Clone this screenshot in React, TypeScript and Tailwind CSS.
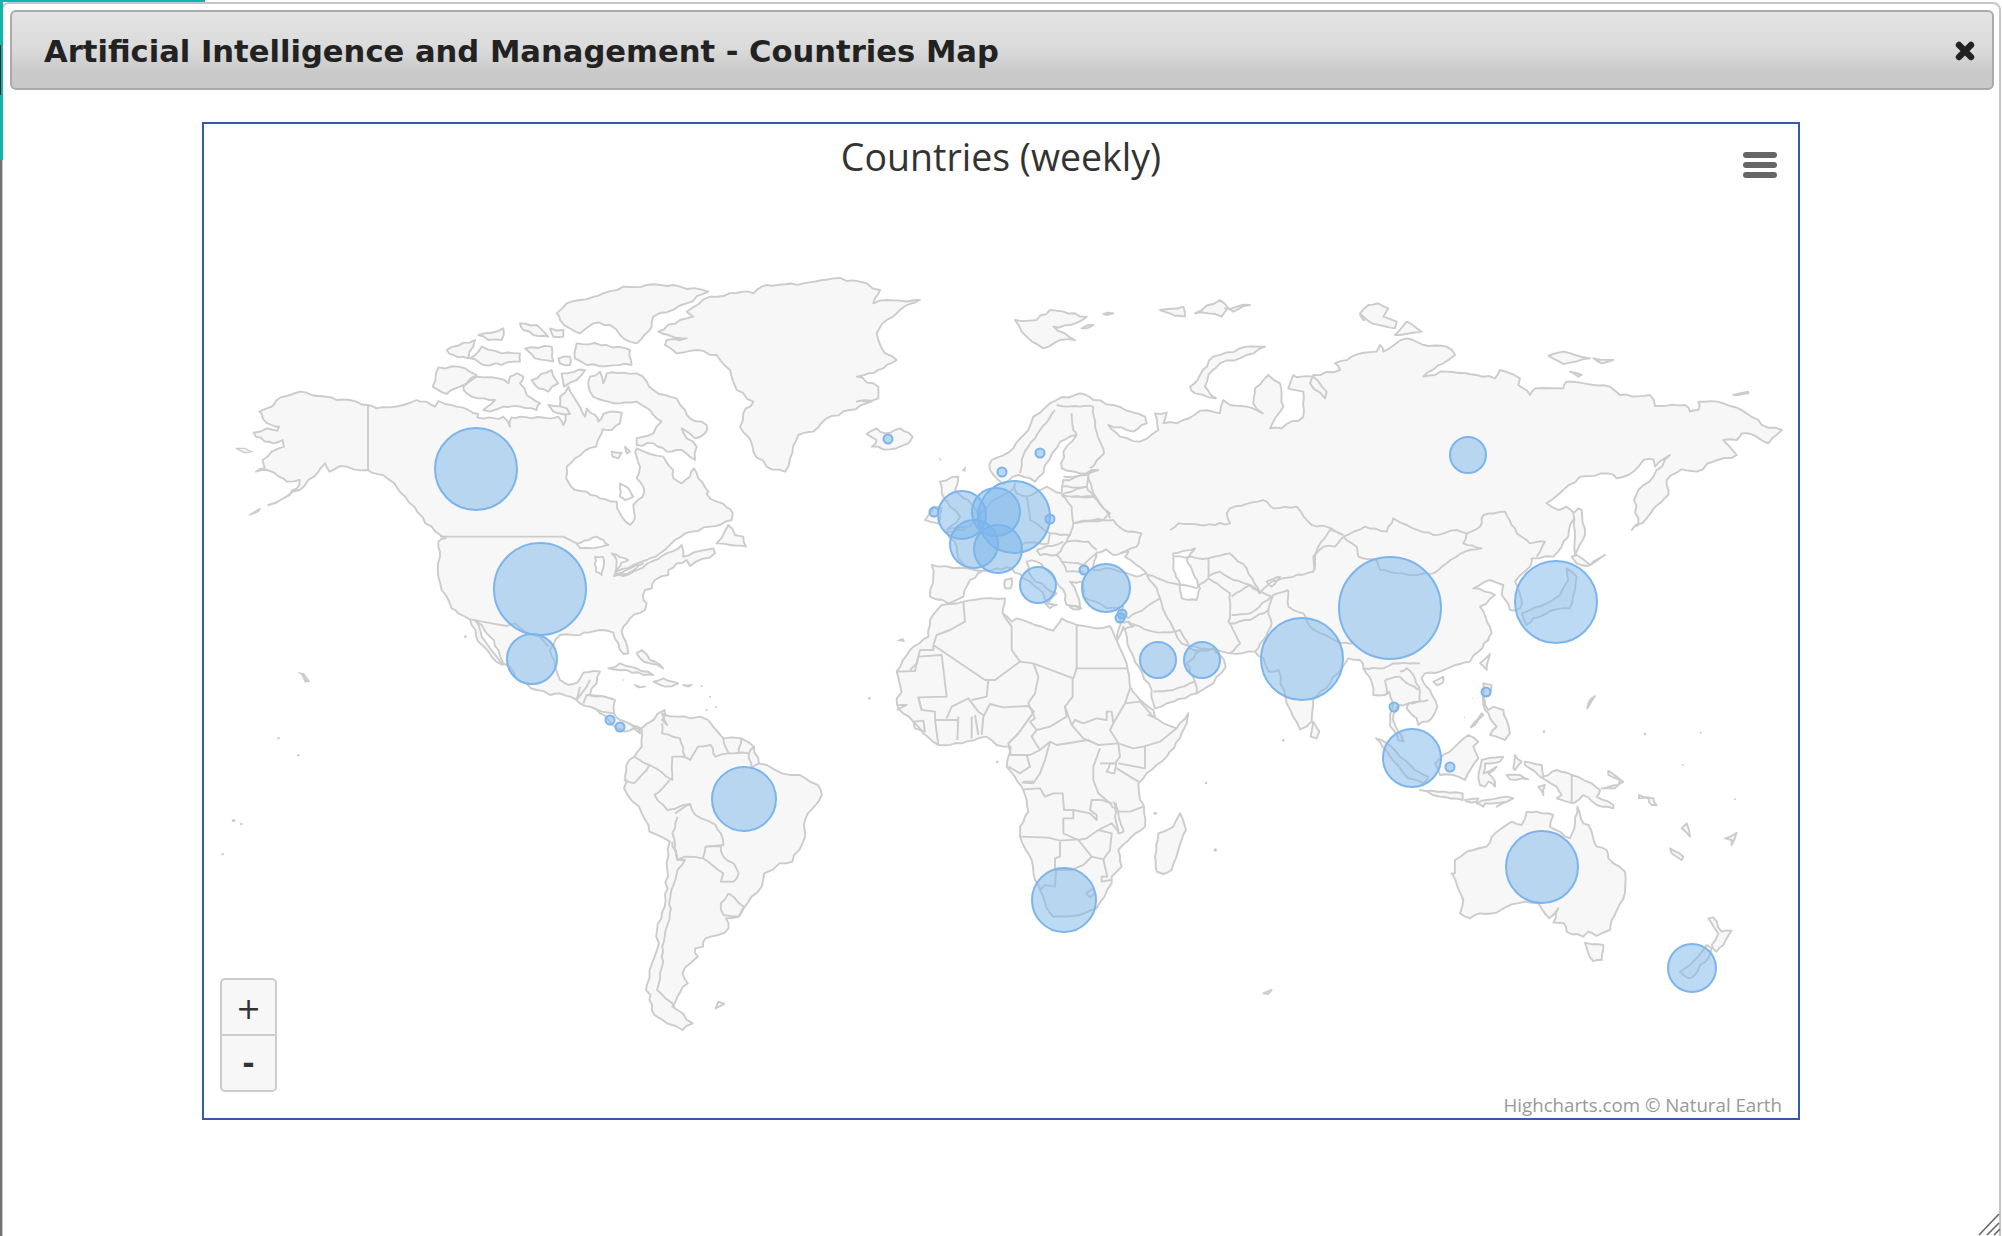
import React from "react";

function rough(p: string, amp: number, seg = 22): string {
  const pts = p.trim().split(/\s+/).map((s) => s.split(",").map(Number));
  const out: string[] = [];
  let k = 0;
  for (let i = 0; i < pts.length; i++) {
    const [x1, y1] = pts[i];
    const [x2, y2] = pts[(i + 1) % pts.length];
    out.push(`${x1},${y1}`);
    const dx = x2 - x1;
    const dy = y2 - y1;
    const len = Math.hypot(dx, dy);
    const n = Math.ceil(len / seg);
    for (let j = 1; j < n; j++) {
      k++;
      const h = Math.sin(k * 12.9898 + x1 * 0.37 + y1 * 0.73) * 43758.5453;
      const f = (h - Math.floor(h) - 0.5) * 2 * amp;
      out.push(`${(x1 + (dx * j) / n - (dy / len) * f).toFixed(1)},${(y1 + (dy * j) / n + (dx / len) * f).toFixed(1)}`);
    }
  }
  return out.join(" ");
}
function roughOpen(p: string, amp: number, seg = 18): string {
  const pts = p.trim().split(/\s+/).map((s) => s.split(",").map(Number));
  const out: string[] = [];
  let k = 0;
  for (let i = 0; i < pts.length - 1; i++) {
    const [x1, y1] = pts[i];
    const [x2, y2] = pts[i + 1];
    out.push(`${x1},${y1}`);
    const dx = x2 - x1;
    const dy = y2 - y1;
    const len = Math.hypot(dx, dy);
    const n = Math.ceil(len / seg);
    for (let j = 1; j < n; j++) {
      k++;
      const h = Math.sin(k * 78.233 + x1 * 0.51 + y1 * 0.29) * 24634.6345;
      const f = (h - Math.floor(h) - 0.5) * 2 * amp;
      out.push(`${(x1 + (dx * j) / n - (dy / len) * f).toFixed(1)},${(y1 + (dy * j) / n + (dx / len) * f).toFixed(1)}`);
    }
  }
  out.push(pts[pts.length - 1].join(","));
  return out.join(" ");
}

const SW = 1.9;
const Land = ({ p, a = 4.5 }: { p: string; a?: number }) => <polygon points={rough(p, a)} fill="#f7f7f7" stroke="#cccccc" strokeWidth={SW} strokeLinejoin="round" vectorEffect="non-scaling-stroke" />;
const Hole = ({ p }: { p: string }) => <polygon points={rough(p, 2.5, 14)} fill="#ffffff" stroke="#cccccc" strokeWidth={SW} strokeLinejoin="round" vectorEffect="non-scaling-stroke" />;
const Line = ({ p, a = 0 }: { p: string; a?: number }) => <polyline points={a ? roughOpen(p, a) : p} fill="none" stroke="#cccccc" strokeWidth={SW} strokeLinejoin="round" vectorEffect="non-scaling-stroke" />;
const Speck = ({ x, y, s = 5 }: { x: number; y: number; s?: number }) => <circle cx={x} cy={y} r={s} fill="#cccccc" />;

const northAmerica = "-156,405 -131,415 -91,412 -50,405 -10,390 0,395 20,395 45,410 55,393 75,402 110,410 145,420 175,432 172,442 225,445 250,440 270,470 275,442 300,440 335,445 385,445 415,440 430,465 437,438 420,405 420,380 445,350 470,395 495,440 500,415 525,435 535,455 550,432 570,425 605,428 600,460 575,480 548,478 545,490 528,530 495,542 465,565 440,590 438,625 465,660 500,665 540,685 590,695 600,730 630,765 645,745 640,705 668,680 670,650 650,625 660,590 650,560 650,535 690,552 730,560 760,600 760,625 785,640 810,620 822,595 835,625 865,665 860,672 890,695 920,712 938,730 935,750 900,765 870,770 815,785 765,810 720,850 680,870 640,885 590,905 582,918 610,918 640,905 680,882 745,848 785,825 790,860 820,848 880,835 885,850 810,888 800,870 770,880 745,900 745,915 705,930 695,955 675,960 670,990 680,1000 675,1020 630,1045 610,1070 605,1085 622,1130 625,1150 610,1152 595,1120 580,1088 540,1080 505,1088 480,1095 420,1095 400,1125 390,1140 405,1190 420,1230 445,1245 472,1238 490,1208 540,1205 530,1240 515,1255 510,1275 545,1278 585,1290 582,1330 600,1350 630,1362 655,1370 660,1390 640,1375 615,1385 590,1375 565,1350 540,1330 510,1310 480,1300 450,1280 420,1270 390,1275 350,1260 300,1235 280,1205 250,1180 235,1140 210,1100 185,1065 165,1050 185,1100 210,1135 248,1185 215,1160 175,1115 150,1048 115,1030 95,1015 65,960 55,920 60,860 55,815 77,805 16,760 -17,710 -44,680 -77,640 -111,615 -156,600 -241,588 -271,605 -285,580 -318,620 -361,660 -399,678 -455,705 -405,682 -369,655 -361,630 -399,635 -423,620 -459,600 -492,605 -466,595 -472,570 -445,545 -409,530 -412,510 -439,520 -466,515 -492,500 -499,488 -459,475 -428,482 -423,470 -445,465 -472,445 -482,425 -445,410 -432,392 -399,378 -358,365 -325,375 -298,378 -251,390 -191,395";

const arctic = [
  "505,345 510,320 540,305 550,340 560,310 610,308 650,310 680,335 700,360 735,375 770,385 795,420 810,445 860,465 855,490 825,505 785,475 800,505 830,530 825,570 785,540 740,545 700,520 650,525 650,505 700,490 725,455 690,420 650,395 600,400 565,395 520,380",
  "130,350 170,320 235,325 265,340 270,320 290,310 310,320 300,340 320,375 360,400 350,420 300,410 250,410 210,425 190,420 225,390 175,385 140,370",
  "38,350 55,292 115,290 170,315 120,350 80,372",
  "335,330 395,300 415,340 385,365 345,345",
  "425,310 495,300 470,330 432,350",
  "385,405 440,415 450,432 400,425",
  "410,130 440,100 480,90 550,70 610,50 680,45 760,45 865,65 800,100 700,140 695,170 650,220 630,215 600,195 570,165 520,160 480,190 450,175 420,150",
  "470,220 560,225 630,240 635,285 500,285 465,265",
  "80,240 165,210 145,265 100,255",
  "150,265 185,230 245,250 300,250 300,275 190,285",
  "175,195 250,175 245,210 205,210",
  "300,160 350,165 385,200 340,195 310,180",
  "315,235 395,230 400,275 345,265",
  "390,175 430,180 430,200 400,200",
  "415,265 450,260 450,285 420,280",
  "575,545 605,548 595,565 578,560",
  "715,185 780,150 820,140 800,125 870,80 970,65 1000,70 1040,45 1150,40 1240,25 1320,35 1380,60 1360,100 1400,90 1500,90 1440,120 1400,150 1370,190 1395,250 1430,270 1390,295 1345,310 1310,320 1375,350 1375,385 1310,395 1355,395 1290,420 1220,445 1180,485 1135,495 1110,565 1095,605 1040,590 1000,545 985,500 960,470 970,430 1000,395 950,360 930,300 890,255 830,240 770,250 735,225 740,210 800,205 745,195",
  "1340,492 1370,475 1395,490 1440,475 1478,500 1465,520 1410,538 1355,530 1370,510",
  "890,820 925,765 945,795 970,800 978,830 930,825",
  "565,1195 600,1180 650,1195 700,1215 670,1215 620,1200",
  "700,1235 730,1225 775,1240 735,1250",
  "645,1245 675,1250 655,1252",
  "790,1245 815,1245 805,1250",
  "650,1150 665,1140 690,1170 730,1195 690,1180 660,1165",
  "615,530 630,545 620,550",
];

const southAmerica = "905,90 880,70 905,85 950,30 945,60 955,75 945,40 975,50 1000,55 1020,50 1035,60 1045,80 1065,115 1100,115 1125,140 1135,190 1150,195 1180,220 1215,225 1250,255 1258,285 1240,325 1225,360 1220,430 1200,485 1175,490 1145,520 1140,560 1120,590 1105,625 1095,650 1070,655 1075,685 1055,705 1030,715 1025,740 1010,745 1015,770 1000,790 985,820 995,850 975,890 965,920 975,930 1005,970 985,990 955,970 930,945 920,900 915,855 925,790 935,750 935,690 950,620 955,510 960,425 920,395 905,340 870,265 875,195 890,170 905,140";
const saBorders = [
  "965,425 975,480 990,480 975,510 960,600 960,640 945,740 945,800 935,870 970,920",
  "970,340 1000,312 1010,345 1050,375 1060,400 1065,435 1030,440 1025,475 990,470 975,480 965,400 975,350",
  "1030,440 1060,438 1065,470 1085,490 1095,520 1085,545 1060,545 1065,520 1025,475",
  "1075,580 1105,620 1095,650 1065,645 1060,610 1075,580",
  "960,240 930,285 955,330 1000,312",
  "890,170 920,195 890,250 870,240",
  "945,70 945,100 980,115 990,170 965,170 965,240 920,195",
  "985,170 1000,180 1015,140 1040,135 1050,170 1075,160 1065,115",
  "1095,160 1100,115",
  "1125,140 1115,160 1075,160",
  "1135,190 1120,205 1115,160",
];

const africa = "185,15 250,5 310,-5 375,-5 368,40 395,65 410,55 465,75 520,92 545,55 590,75 650,85 690,78 712,125 740,190 750,260 780,300 820,330 825,350 805,345 850,370 890,385 925,340 920,370 900,415 860,470 800,520 775,550 780,600 792,620 795,680 755,710 715,750 725,800 695,830 695,850 650,925 600,945 520,950 500,925 480,870 465,840 455,780 420,710 420,680 445,635 440,600 425,560 380,500 385,470 392,440 350,435 320,410 245,430 175,435 130,400 100,365 55,325 50,295 65,275 50,215 90,150 145,110 150,60";
const africaBorders = [
  "250,5 255,65 210,90 170,105 160,135",
  "90,210 110,190 120,150 160,150 160,135",
  "50,215 105,213 115,170 185,165 200,290 115,292 125,330",
  "160,135 315,240 345,240 420,185 395,150 395,80 370,45",
  "590,75 590,205 745,205",
  "420,185 460,190 580,235 590,205",
  "460,190 475,230 465,280 445,310 465,355 450,365 470,390 510,380 560,350 555,320 578,290 578,235",
  "555,320 575,375 585,360 610,370 650,355 680,360 680,335 695,335 700,370 735,310 750,265",
  "735,310 780,305 815,345",
  "890,385 840,425 790,440 760,445 715,430 690,390 700,370",
  "575,375 610,415 655,435 715,430",
  "470,390 455,410 480,450 510,425 530,435 625,420 655,435",
  "510,425 495,480 480,520 460,550 425,548",
  "660,445 640,500 640,540 655,580 690,610 700,625",
  "430,568 480,565 495,590 520,580 548,580 552,630 580,630 630,640 650,660 650,645 630,630 635,600 665,600 695,610",
  "715,430 720,470 705,490 660,490",
  "715,490 795,505 795,440",
  "710,505 775,545",
  "700,605 715,635 750,635 790,620",
  "715,635 708,665 730,690 720,700 695,670 655,690 620,715 595,720 550,700 550,655 580,655 580,630",
  "595,720 635,770 670,778 690,750 695,700 655,690",
  "540,725 540,770 525,775 525,810 575,810 610,795 635,770",
  "420,710 505,713 540,722 595,718",
  "480,870 495,855 525,860 528,810",
  "670,778 682,830 665,830 665,845 692,840",
  "618,880 640,865 645,880 630,892 618,880",
  "305,405 310,350 330,312 370,322 445,318 462,335 415,400 385,430",
  "275,300 320,290 325,240",
  "200,355 215,320 265,295 295,335 310,345",
  "235,350 232,420", "275,350 275,415", "285,345 295,405",
  "165,360 235,360",
  "115,292 125,330 165,335 165,360 175,435",
  "55,315 80,315 50,330", "100,365 130,362 135,395 105,385 100,365",
  "415,400 385,430 392,465 450,465 480,450",
  "385,500 420,520 450,500 440,465",
  "430,545 460,545",
];

const eurasia = "885,1115 905,1150 945,1160 1050,1180 1125,1175 1150,1195 1165,1235 1195,1230 1220,1330 1260,1408 1295,1385 1300,1320 1350,1270 1385,1225 1405,1195 1440,1200 1450,1225 1475,1265 1480,1305 1515,1305 1528,1295 1540,1330 1530,1365 1530,1398 1555,1440 1570,1445 1545,1395 1540,1365 1555,1335 1585,1330 1580,1345 1610,1375 1615,1395 1655,1375 1672,1340 1650,1290 1625,1255 1635,1240 1680,1235 1725,1215 1770,1205 1795,1175 1825,1140 1835,1120 1830,1100 1800,1040 1845,1005 1815,995 1780,985 1830,960 1870,975 1865,1005 1890,1050 1920,1045 1925,1020 1905,965 1950,920 1955,895 2020,890 2065,830 2085,760 2060,740 2035,750 2000,730 2050,690 2100,650 2185,640 2210,655 2245,645 2290,600 2320,598 2325,620 2370,585 2320,650 2275,690 2262,720 2275,795 2255,810 2300,775 2345,725 2365,705 2360,660 2405,628 2450,635 2500,605 2570,585 2530,540 2570,540 2585,520 2630,530 2665,550 2705,510 2645,495 2635,480 2600,460 2530,430 2455,425 2455,450 2430,455 2415,435 2325,438 2310,405 2220,405 2190,380 2140,375 2060,365 2050,385 1965,385 1950,405 1915,375 1920,355 1860,330 1845,355 1790,345 1700,335 1630,350 1690,310 1725,285 1700,260 1630,255 1580,235 1510,275 1500,255 1490,275 1415,290 1365,310 1380,330 1300,345 1290,370 1335,415 1340,395 1300,350 1262,350 1240,345 1225,385 1270,395 1270,470 1205,505 1170,505 1210,440 1200,370 1165,345 1125,385 1120,430 1148,460 1100,440 1050,435 1030,420 1020,460 960,452 890,490 850,490 860,458 825,460 835,510 780,545 720,530 685,495 760,515 800,490 795,470 700,435 640,420 600,400 530,420 460,470 445,510 400,565 335,600 330,630 370,672 415,645 465,665 490,640 495,615 540,545 590,525 550,575 545,625 600,640 655,630 620,645 550,660 545,700 500,680 440,710 410,700 405,670 390,695 340,720 300,760 250,810 200,815 230,860 235,895 262,925 155,915 160,950 150,1010 205,1030 250,1010 270,960 310,932 350,925 395,925 430,955 460,975 490,1000 505,1030 530,1000 500,985 455,950 440,905 470,905 505,935 550,990 560,1035 600,1040 590,1000 570,965 605,965 610,1010 680,1045 730,1040 720,1075 715,1110 712,1140 730,1100 750,1170 815,1290 825,1345 880,1325 950,1300 1000,1270 1037,1220 1020,1185 1000,1165 960,1172 930,1165 900,1110";

const euBorders = [
  "640,440 645,500 660,545 672,580 630,625",
  "420,640 425,600 445,560 480,510 525,450",
  "530,435 600,440 640,440",
  "575,460 580,510 590,525",
  "550,650 625,645 620,680 545,680",
  "545,705 620,680 640,710 575,710 545,705",
  "575,710 640,710 670,745 690,760 670,780 580,790",
  "545,705 575,740 580,790 570,825 510,820 450,780 440,710",
  "580,790 640,780 700,780 730,810 785,820 770,860 720,880",
  "570,825 560,845 625,845 650,870",
  "560,845 530,885 545,905 610,915 650,880",
  "470,870 550,845",
  "470,870 480,885 530,885",
  "545,905 560,935 610,935",
  "510,820 505,850 430,850 420,880",
  "262,925 310,932",
  "870,810 895,790 960,795 1050,790 1040,760 1050,745 1150,720 1180,745 1250,740 1295,795 1340,800 1390,825",
  "625,645 640,700 680,755 690,775",
  "880,890 985,895 985,950 1020,935 1060,960 1110,975 1140,1000 1175,965 1205,955 1300,935 1305,900 1315,860 1350,810 1390,825",
  "985,895 1050,880 1100,925 1140,1000",
  "950,985 985,955 1050,1000 1050,1060 1045,1085 1065,1120 1080,1150 1050,1180",
  "1055,1010 1110,975 1175,1010 1110,1060 1055,1065",
  "1050,1090 1110,1080 1165,1050 1180,1005 1225,990",
  "1225,990 1225,1040 1270,1060 1290,1100 1380,1150 1420,1150",
  "1125,1175 1150,1140 1175,1090 1165,1050",
  "800,945 880,970 950,985",
  "720,1050 745,1075 800,1040 840,1015 830,985 800,945",
  "840,1015 855,1060 885,1115",
  "745,1085 765,1095 820,1115 885,1115",
  "720,1085 745,1085 760,1100 730,1110",
  "820,1295 880,1290 945,1265 950,1300",
  "945,1265 920,1210 960,1172",
  "1390,830 1455,800 1520,815 1540,775 1580,795 1600,805 1660,825 1730,810 1760,820 1750,850 1805,865 1755,875 1700,910 1660,940 1600,945 1500,930 1490,900 1435,890 1430,860 1390,830",
  "1760,820 1800,800 1810,765 1875,755 1910,820 1950,850 1995,845 1970,890",
  "1390,830 1365,860 1330,860 1300,890 1305,930",
  "1450,1225 1510,1225 1540,1210 1620,1210",
  "1515,1260 1520,1305", "1515,1260 1560,1250",
  "1560,1235 1580,1225 1605,1255 1620,1295 1620,1325 1585,1330",
  "1585,1330 1645,1320",
  "1560,1250 1590,1275 1615,1290",
];

const oldWorld = [
  "180,665 235,650 225,690 265,720 300,770 270,800 200,810 240,770 210,740 185,700",
  "135,780 160,740 185,745 175,790",
  "375,960 395,955 392,985 375,985",
  "568,1040 585,1038 605,1045 580,1048",
  "495,1030 530,1035 510,1045",
  "930,380 960,345 1000,290 1100,260 1155,260 1100,285 1020,310 985,345 975,380 1008,415 945,400",
  "405,180 470,180 510,150 620,170 570,195 520,200 585,240 540,240 490,265 440,230",
  "840,150 910,140 915,170 870,160",
  "945,160 1020,120 1045,145 1025,170 985,160",
  "1035,145 1110,135 1060,155",
  "670,162 700,160 680,165",
  "605,205 640,195 620,205",
  "1440,165 1490,130 1500,175 1450,180",
];

const eastAsia = [
  "835,685 820,700 825,770 825,825 855,765 845,690",
  "180,100 205,75 235,70 265,85 250,110 290,125 285,145 215,130",
  "285,165 320,125 365,155 300,165",
  "745,228 790,215 870,235 790,252",
  "880,235 940,240 905,250",
  "810,275 845,285 835,290",
  "1300,345 1345,335 1345,340",
  "665,1000 680,1035 700,1015 740,1000 760,990 810,985 825,930 830,890 800,865 805,900 780,945 740,970 690,990",
  "815,830 830,825 870,855 860,858 830,850",
  "870,855 915,825 880,845",
];

const seAsia = [
  "108,295 140,310 180,350 225,390 265,410 250,430 205,415 150,350",
  "300,355 340,325 385,285 415,305 400,320 415,355 375,420 340,405 300,405 285,370",
  "240,450 310,455 368,460 368,480 300,470",
  "375,480 415,475 410,485 380,485",
  "410,490 440,480 500,470 520,475 470,500 500,485 435,490 430,500",
  "415,415 425,360 490,350 480,365 435,370 430,400 470,380 445,400 465,425 465,440 445,425 435,440 420,435",
  "520,385 525,345 545,365 525,390",
  "500,405 540,405 565,418 510,418",
  "595,440 615,435 610,465",
  "555,365 605,375 610,410 650,390 695,405 755,430 780,450 770,470 820,495 820,505 770,495 730,465 700,490 650,475 665,465 650,440 600,410 585,395 555,375",
  "805,392 850,425 825,445 785,445 835,435 840,420 805,405",
  "897,465 940,475 950,495 935,495 925,475 897,475",
  "1025,565 1040,550 1050,590",
  "990,625 1030,650 1025,660 995,640",
  "1155,595 1190,578 1175,615 1175,600",
  "430,130 455,135 450,165 430,170 435,195 445,210 460,200 490,210 500,240 510,280 495,300 450,285 470,260 450,235 430,195",
  "392,262 425,220 430,225 405,255",
  "420,70 450,42 440,90",
  "280,125 310,110 310,125 290,135",
  "765,168 742,205 745,190",
  "345,660 380,635 440,620 465,580 515,545 545,555 560,515 590,515 640,525 630,560 690,595 705,550 712,500 730,550 745,555 770,620 800,630 805,655 855,695 855,760 815,840 810,870 770,888 745,875 730,890 680,875 672,850 640,848 655,805 628,835 595,790 555,785 500,800 470,818 420,820 390,835 360,820 370,780 335,700 345,700",
  "735,908 790,915 785,960 760,963 745,940",
  "1105,835 1120,832 1145,875 1175,872 1150,915 1130,935 1115,915 1135,880",
  "1020,995 1060,965 1100,915 1115,925 1105,955 1080,975 1065,1005 1045,1015 1030,1005",
];

const bubbles: [number, number, number][] = [
  [476, 469, 41], [540, 589, 46], [532, 659, 25], [744, 799, 32], [1064, 900, 32],
  [962, 515, 24], [1014, 517, 36], [996, 512, 24], [974, 544, 24], [998, 549, 24],
  [1038, 585, 18], [1106, 588, 24], [1158, 660, 18], [1202, 660, 18], [1302, 659, 41],
  [1390, 608, 51], [1556, 602, 41], [1468, 455, 18], [1412, 758, 29], [1542, 867, 36], [1692, 968, 24],
  [888, 439, 4.5], [1002, 472, 4.5], [1040, 453, 4.5], [934, 512, 4.5], [1050, 519, 4.5], [1084, 570, 4.5],
  [1122, 614, 4.5], [1120, 618, 4.5], [610, 720, 4.5], [620, 727, 4.5], [1394, 707, 4.5], [1486, 692, 4.5], [1450, 767, 4.5],
];

export default function App() {
  return (
    <div className="relative h-[1236px] w-[2002px] overflow-hidden bg-white">
      <div className="ml-px mt-[2px] h-[1260px] w-[2000px] rounded-t-lg border-2 border-[#c6c6c6] bg-white pl-[7px] pr-[5px] pt-[6px]">
        <div className="flex h-[80px] items-center justify-between rounded-md border-2 border-[#aaaaaa] bg-gradient-to-b from-[#e4e4e4] via-[#dadada] via-50% to-[#c9c9c9] to-80% pl-[32px] pr-[16px]">
          <h1 className="pt-[4px] font-['DejaVu_Sans',sans-serif] text-[30.6px] font-bold leading-none text-[#222222]">Artificial Intelligence and Management - Countries Map</h1>
          <svg className="mt-[2px]" width="22" height="22" viewBox="0 0 22 22">
            <path d="M5 5L17 17M17 5L5 17" stroke="#222222" strokeWidth="6.4" strokeLinecap="round" />
          </svg>
        </div>
        <div className="mt-[32px] flex justify-center pr-[2px]">
          <div className="relative h-[998px] w-[1598px] border-2 border-[#3558b0]">
            <svg className="block h-full w-full" viewBox="204 124 1594 994">
              <g transform="translate(420 270) scale(.33333)">
                <Land p={northAmerica} />
                {arctic.map((p, i) => <Land key={i} p={p} />)}
                <Hole p="470,822 530,800 550,810 565,825 520,835 480,835" />
                <Hole p="525,860 548,860 552,880 545,915 528,905" />
                <Hole p="575,850 625,870 605,878 585,910 590,870" />
                <Hole p="585,915 640,890 670,880 620,912" />
                <Hole p="600,640 625,655 640,680 615,690 600,680" />
                <Line p="-156,405 -156,600" />
                <Line p="60,800 430,800 470,820" />
                <Line p="150,1048 215,1060 260,1068 285,1060 320,1090 360,1100 385,1130" />
                <Line p="480,1250 470,1290 500,1250 510,1230" />
                <Line p="490,1300 500,1275 540,1278" />
                <Line p="510,1310 545,1325 582,1330" />
                <Speck x={845} y={1248} s={3} /><Speck x={870} y={1280} s={3} /><Speck x={860} y={1320} s={3} /><Speck x={888} y={1310} s={3} /><Speck x={136} y={1100} s={4} /><Speck x={1348} y={1285} s={4} /><Speck x={610} y={1230} s={2} />
                <polygon points="1430,1112 1450,1105 1455,1115" fill="#cccccc" />
              </g>
              <g transform="translate(180 260) scale(.44643 .33333)">
                <polygon points="262,1235 278,1240 292,1265 280,1268 272,1245" fill="#cccccc" />
                <polygon points="125,565 145,565 160,575 145,578" fill="#f7f7f7" stroke="#cccccc" strokeWidth={1.4} vectorEffect="non-scaling-stroke" />
                <polygon points="155,765 180,745 175,755" fill="#f7f7f7" stroke="#cccccc" strokeWidth={1.4} vectorEffect="non-scaling-stroke" />
              </g>
              <g transform="translate(180 700) scale(.5102 .33333)">
                <Land p={southAmerica} a={4} />
                {saBorders.map((p, i) => <Line key={i} p={p} a={2.5} />)}
                <Land p="1050,925 1055,905 1067,912" a={0} />
                <Speck x={193} y={115} s={3} /><Speck x={232} y={166} s={3} /><Speck x={105} y={362} s={4} /><Speck x={120} y={372} s={3} /><Speck x={84} y={463} s={3} />
              </g>
              <g transform="translate(880 600) scale(.33333)">
                <Land p={africa} a={2.5} />
                {africaBorders.map((p, i) => <Line key={i} p={p} />)}
                <Hole p="680,515 690,490 708,490 703,520" />
                <Hole p="708,610 715,640 725,680 730,695 715,700 705,650" />
                <Land p="825,770 835,700 880,680 900,640 918,690 905,720 875,810 850,822 830,815" a={2} />
                <Land p="1150,1180 1175,1170 1165,1182" a={0} />
                <Land p="1300,365 1318,395 1310,415 1292,410" a={0} />
                <polygon points="50,122 65,115 75,125" fill="#cccccc" />
                <Speck x={352} y={486} s={4} /><Speck x={978} y={549} s={4} /><Speck x={826} y={640} s={5} /><Speck x={1006} y={750} s={5} /><Speck x={1210} y={421} s={4} />
              </g>
              <g transform="translate(880 260) scale(.33333)">
                <Land p={eurasia} />
                <Hole p="650,878 678,868 700,885 745,875 735,890 770,915 800,940 770,950 690,925 640,930" />
                <Hole p="880,880 945,865 920,900 940,940 960,985 950,1020 905,1015 900,970 880,930" />
                <Hole p="1160,965 1200,950 1175,980" />
                {euBorders.map((p, i) => <Line key={i} p={p} a={3} />)}
                {oldWorld.map((p, i) => <Land key={i} p={p} />)}
                <polygon points="175,590 185,600 180,602" fill="#cccccc" />
                <polygon points="245,632 258,618 256,636" fill="#cccccc" />
              </g>
              <g transform="translate(1300 280) scale(.33333)">
                {eastAsia.map((p, i) => <Land key={i} p={p} a={2.5} />)}
              </g>
              <g transform="translate(1340 640) scale(.33333)">
                {seAsia.map((p, i) => <Land key={i} p={p} a={3} />)}
                <Line p="695,405 695,490" />
                <Speck x={612} y={275} s={4} /><Speck x={915} y={282} s={4} /><Speck x={1082} y={278} s={3} /><Speck x={1028} y={375} s={3} /><Speck x={1185} y={478} s={3} /><Speck x={397} y={175} s={2} /><Speck x={373} y={232} s={2} />
              </g>
              {bubbles.map(([x, y, r], i) => (
                <circle key={i} cx={x} cy={y} r={r} fill="#7cb5ec" fillOpacity={0.5} stroke="#7cb5ec" strokeWidth={2} />
              ))}
            </svg>
            <div className="absolute inset-x-0 top-[8px] text-center font-['Open_Sans',sans-serif] text-[37.5px] leading-[50px] text-[#333333]">Countries (weekly)</div>
            <div className="absolute right-[21px] top-[28px] flex w-[34px] flex-col gap-[4px]">
              <div className="h-[6px] rounded-[3px] bg-[#666666]" />
              <div className="h-[6px] rounded-[3px] bg-[#666666]" />
              <div className="h-[6px] rounded-[3px] bg-[#666666]" />
            </div>
            <div className="absolute bottom-[26px] left-[16px] w-[57px] overflow-hidden rounded-[5px] border-2 border-[#cccccc] bg-[#f7f7f7] font-['DejaVu_Sans',sans-serif] text-[#333333]">
              <div className="flex h-[56px] items-center justify-center border-b-2 border-[#cccccc] pt-[3px] text-[30px] leading-none">+</div>
              <div className="flex h-[54px] items-center justify-center pt-[2px] text-[30px] font-bold leading-none">-</div>
            </div>
            <div className="absolute bottom-0 right-[16px] font-['Open_Sans',sans-serif] text-[18.7px] leading-[26px] text-[#999999]">Highcharts.com © Natural Earth</div>
          </div>
        </div>
      </div>
      <div className="absolute left-0 top-0 h-[2px] w-[205px] bg-[#12b5ad]" />
      <div className="absolute left-0 top-0 h-[160px] w-[3px] bg-[#12b5ad]" />
      <div className="absolute left-0 top-[45px] h-[50px] w-px bg-[#1a2a2a]" />
      <div className="absolute bottom-0 left-0 top-[160px] w-[2px] bg-[#727272]" />
      <svg className="absolute bottom-0 right-0" width="24" height="24" viewBox="0 0 24 24">
        <path d="M1 23L21 2M9 23L21 11M16 23L22 17" stroke="#666666" strokeWidth="1.6" fill="none" />
      </svg>
    </div>
  );
}
